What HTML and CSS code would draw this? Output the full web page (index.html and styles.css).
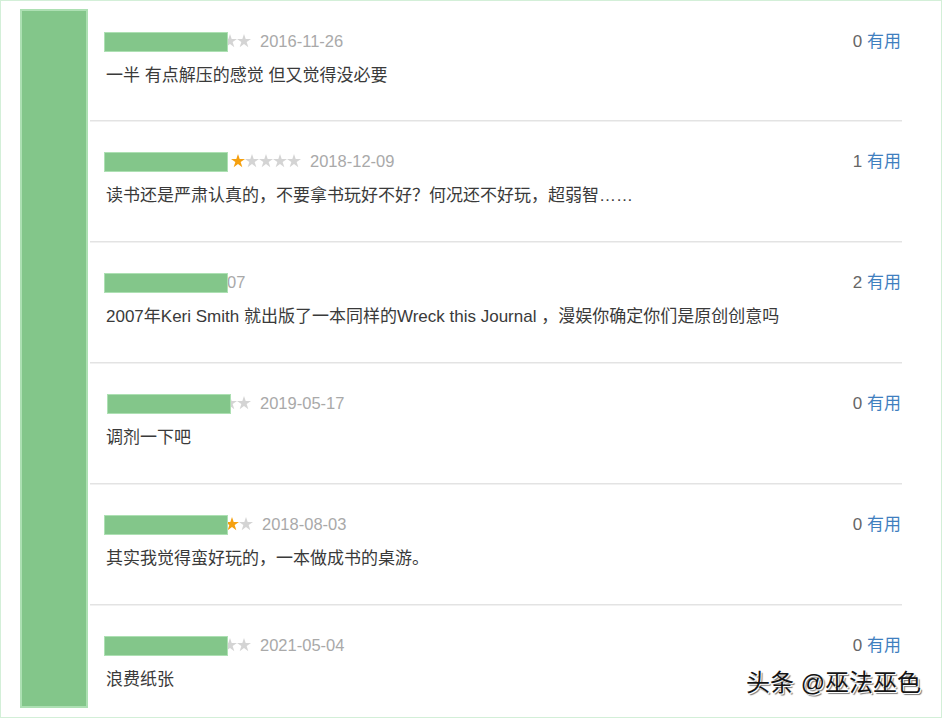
FILE: index.html
```html
<!DOCTYPE html>
<html lang="zh-CN">
<head>
    <meta charset="UTF-8">
    <title>短评</title>
    <link rel="stylesheet" href="styles.css">
</head>
<body>
    <div class="page">
        <div class="side-mask"></div>

        <ul class="comments">
            <li class="comment">
                <div class="meta">
                    <span class="name"></span>
                    <span class="stars">
                        <i class="star"></i><i class="star"></i><i class="star"></i><i class="star"></i><i class="star"></i>
                    </span>
                    <span class="date">2016-11-26</span>
                    <span class="mask"></span>
                    <span class="votes"><span class="count">0</span> <a class="useful">有用</a></span>
                </div>
                <p class="text">一半 有点解压的感觉 但又觉得没必要</p>
            </li>
            <li class="comment">
                <div class="meta">
                    <span class="name name-long"></span>
                    <span class="stars">
                        <i class="star on"></i><i class="star"></i><i class="star"></i><i class="star"></i><i class="star"></i>
                    </span>
                    <span class="date">2018-12-09</span>
                    <span class="mask"></span>
                    <span class="votes"><span class="count">1</span> <a class="useful">有用</a></span>
                </div>
                <p class="text">读书还是严肃认真的，不要拿书玩好不好？何况还不好玩，超弱智……</p>
            </li>
            <li class="comment">
                <div class="meta">
                    <span class="name name-short"></span>
                    <span class="date">2019-06-07</span>
                    <span class="mask"></span>
                    <span class="votes"><span class="count">2</span> <a class="useful">有用</a></span>
                </div>
                <p class="text">2007年Keri Smith 就出版了一本同样的Wreck this Journal ，漫娱你确定你们是原创创意吗</p>
            </li>
            <li class="comment">
                <div class="meta">
                    <span class="name"></span>
                    <span class="stars">
                        <i class="star"></i><i class="star"></i><i class="star"></i><i class="star"></i><i class="star"></i>
                    </span>
                    <span class="date">2019-05-17</span>
                    <span class="mask mask-shift"></span>
                    <span class="votes"><span class="count">0</span> <a class="useful">有用</a></span>
                </div>
                <p class="text">调剂一下吧</p>
            </li>
            <li class="comment">
                <div class="meta">
                    <span class="name name-wide"></span>
                    <span class="stars">
                        <i class="star on"></i><i class="star on"></i><i class="star on"></i><i class="star on"></i><i class="star"></i>
                    </span>
                    <span class="date">2018-08-03</span>
                    <span class="mask"></span>
                    <span class="votes"><span class="count">0</span> <a class="useful">有用</a></span>
                </div>
                <p class="text">其实我觉得蛮好玩的，一本做成书的桌游。</p>
            </li>
            <li class="comment">
                <div class="meta">
                    <span class="name"></span>
                    <span class="stars">
                        <i class="star on"></i><i class="star on"></i><i class="star on"></i><i class="star"></i><i class="star"></i>
                    </span>
                    <span class="date">2021-05-04</span>
                    <span class="mask"></span>
                    <span class="votes"><span class="count">0</span> <a class="useful">有用</a></span>
                </div>
                <p class="text">浪费纸张</p>
            </li>
        </ul>

        <div class="watermark">头条 @巫法巫色</div>
    </div>
</body>
</html>
```

FILE: styles.css
```css
body {
    margin: 0;
    background-color: #fff;
    font-family: "Liberation Sans", "Noto Sans CJK SC", sans-serif;
}
.page {
    position: relative;
    display: flex;
    align-items: flex-start;
    width: 942px;
    height: 718px;
    box-sizing: border-box;
    border: 1px solid #d3efd8;
    overflow: hidden;
}
.side-mask {
    flex: none;
    width: 68px;
    height: 699px;
    margin: 8px 0 0 19px;
    box-sizing: border-box;
    background-color: #83c68a;
    border: 2px solid #ade0b3;
}
.comments {
    list-style: none;
    margin: 0 0 0 2px;
    padding: 0;
    width: 812px;
}
.comment {
    height: 120px;
    padding: 30px 1px 0 14px;
    box-sizing: border-box;
    border-bottom: 1px solid #e3e3e3;
    box-shadow: 0 1px 0 #f1f1f1;
}
.comment + .comment {
    height: 121px;
}
.comment:last-child {
    border-bottom: none;
    box-shadow: none;
}
.meta {
    position: relative;
    display: flex;
    align-items: center;
    height: 20px;
}
.name {
    width: 77px;
}
.name-long {
    width: 127px;
}
.name-wide {
    width: 79px;
}
.name-short {
    width: 48px;
}
.stars {
    display: flex;
    gap: 0;
}
.star {
    display: block;
    width: 14px;
    height: 14px;
    background-color: #d4d4d4;
    clip-path: polygon(50% 0%, 62% 36%, 100% 36%, 69% 58%, 81% 95%, 50% 72%, 19% 95%, 31% 58%, 0% 36%, 38% 36%);
}
.star.on {
    background-color: #f5a00f;
}
.date {
    margin-left: 9px;
    font-size: 16.5px;
    color: #a9a9a9;
}
.mask {
    position: absolute;
    left: 0;
    top: 1px;
    width: 124px;
    height: 20px;
    box-sizing: border-box;
    background-color: #83c68a;
    border: 1px solid #ade0b3;
}
.mask-shift {
    left: 3px;
}
.votes {
    margin: -4px 0 0 auto;
    font-size: 17px;
}
.count {
    color: #666;
}
.useful {
    color: #3f7fbf;
}
.text {
    margin: 13px 0 0 2px;
    font-size: 17px;
    line-height: 24px;
    color: #3a3a3a;
}
.watermark {
    position: absolute;
    right: 20px;
    bottom: 19px;
    font-size: 24px;
    color: #151515;
    text-shadow: 1px 1px 0 #fff, 2px 2px 1px #7a7a7a;
}
```
